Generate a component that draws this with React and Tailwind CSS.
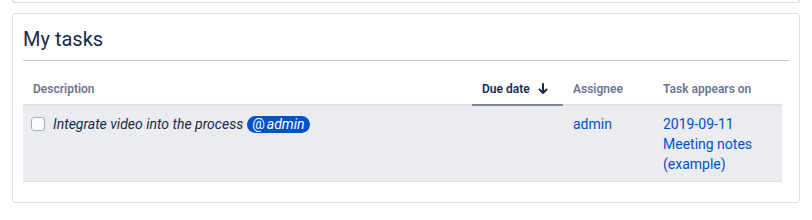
import React from "react";

const font = { fontFamily: "Roboto, 'Noto Sans', sans-serif" };

function SortArrow() {
    return (
        <svg width="10" height="12" viewBox="0 0 10 12" className="ml-[8px] text-[#172b4d]">
            <path d="M5 1v9M1.5 6.5L5 10l3.5-3.5" fill="none" stroke="currentColor" strokeWidth="2" strokeLinecap="round" strokeLinejoin="round" />
        </svg>
    );
}

export default function App() {
    return (
        <div className="bg-white px-3 pb-4 text-[#172b4d]" style={font}>
            {/* tail of the card above */}
            <div className="h-[3px] rounded-b-[3px] border-x border-b border-[#dcdfe4]" />

            <div className="mt-[10px] rounded-[3px] border border-[#dcdfe4] px-[10px] pt-[13px] pb-[20px]">
                <h2 className="text-[20px] leading-[24px] font-normal text-[#172b4d]">My tasks</h2>
                <div className="mt-[9px] h-px bg-[#c1c7d0]" />

                <div className="mt-[14px] grid grid-cols-[449px_91px_90px_129px] text-[14px] leading-[20px]">
                    <div className="border-b-2 border-[#dfe1e6] px-[10px] pt-[4px] pb-[5px] text-[12px] font-semibold text-[#6b778c]">Description</div>
                    <div className="flex items-center border-b-2 border-[#7a869a] px-[10px] pt-[4px] pb-[5px] text-[12px] font-semibold text-[#172b4d]">
                        Due date <SortArrow />
                    </div>
                    <div className="border-b-2 border-[#dfe1e6] px-[10px] pt-[4px] pb-[5px] text-[12px] font-semibold text-[#6b778c]">Assignee</div>
                    <div className="border-b-2 border-[#dfe1e6] px-[10px] pt-[4px] pb-[5px] text-[12px] font-semibold text-[#6b778c]">Task appears on</div>

                    <div className="border-b border-[#dfe1e6] bg-[#ebecf0] pl-[8px] pr-[10px] pt-[8px] pb-[7px]">
                        <div className="flex items-center">
                            <span className="mr-[8px] h-[14px] w-[14px] shrink-0 rounded-[3px] border border-[#a5adba] bg-[#fafbfc]" />
                            <span className="italic">Integrate video into the process</span>
                            <span className="ml-[4px] rounded-[20px] bg-[#0052cc] px-[5px] text-white leading-[17px]">
                                @<span className="ml-[2px] italic">admin</span>
                            </span>
                        </div>
                    </div>
                    <div className="border-b border-[#dfe1e6] bg-[#ebecf0]" />
                    <div className="border-b border-[#dfe1e6] bg-[#ebecf0] px-[10px] pt-[8px] pb-[7px] text-[#0052cc]">admin</div>
                    <div className="border-b border-[#dfe1e6] bg-[#ebecf0] px-[10px] pt-[8px] pb-[7px] text-[#0052cc]">
                        <div>2019-09-11</div>
                        <div>Meeting notes (example)</div>
                    </div>
                </div>
            </div>
        </div>
    );
}
